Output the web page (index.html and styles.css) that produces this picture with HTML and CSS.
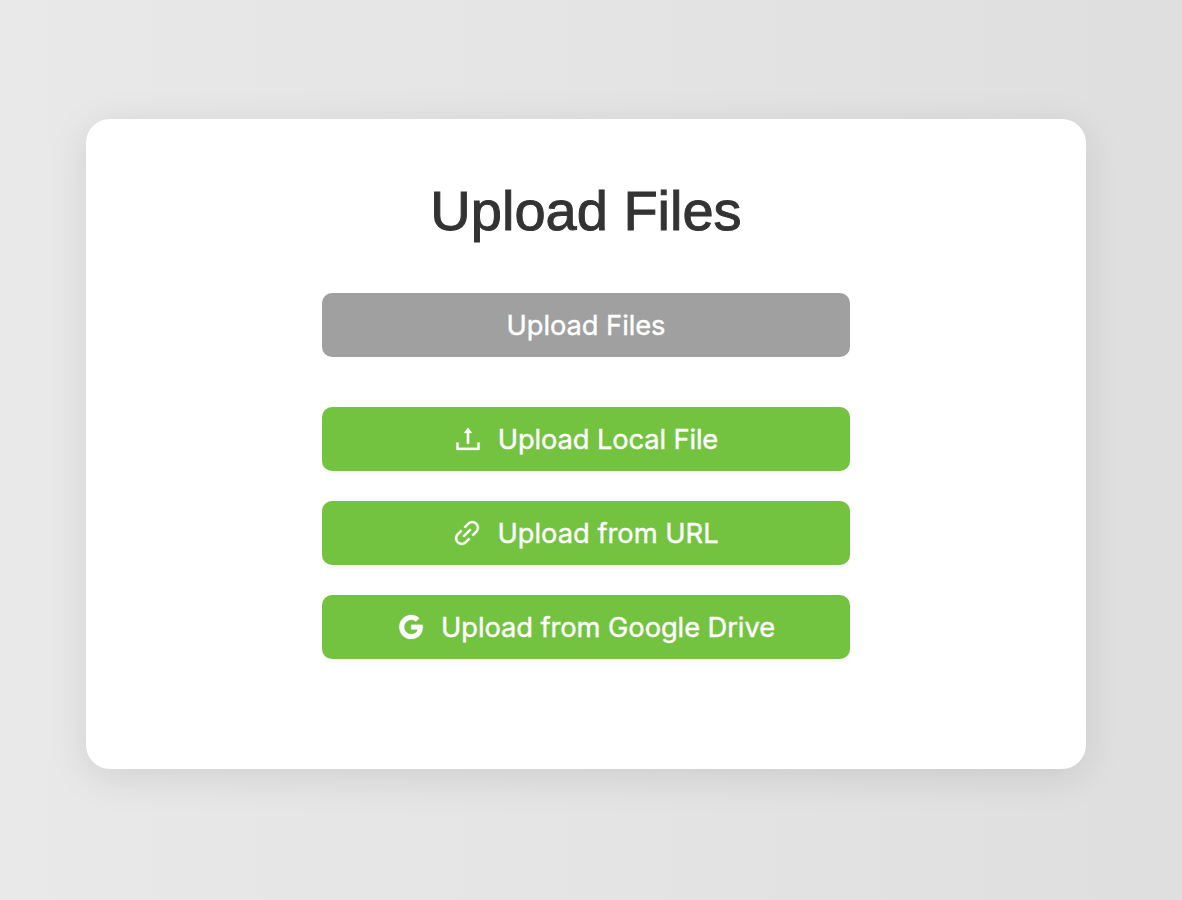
FILE: index.html
```
<!DOCTYPE html>
<html lang="en">
<head>
<meta charset="utf-8">
<title>Upload Files</title>
<link rel="stylesheet" href="styles.css">
</head>
<body>
<main class="card">
  <h1 class="title">Upload Files</h1>
  <button class="btn btn-muted"><span class="label">Upload Files</span></button>
  <div class="sources">
    <button class="btn">
      <svg class="icon" viewBox="64 64 896 896" fill="currentColor"><path d="M400 317.700h73.900V656c0 4.400 3.600 8 8 8h60c4.400 0 8-3.600 8-8V317.700H624c6.700 0 10.400-7.700 6.300-12.900L518.300 163a8 8 0 0 0-12.600 0l-112 141.700c-4.100 5.300-.4 13 6.300 13zM878 626h-60c-4.400 0-8 3.600-8 8v154H214V634c0-4.400-3.600-8-8-8h-60c-4.400 0-8 3.600-8 8v198c0 17.700 14.300 32 32 32h684c17.700 0 32-14.300 32-32V634c0-4.400-3.600-8-8-8z"/></svg>
      <span class="label label-local">Upload Local File</span>
    </button>
    <button class="btn">
      <svg class="icon" viewBox="64 64 896 896" fill="currentColor"><path d="M574 665.400a8.030 8.030 0 0 0-11.300 0L446.500 781.600c-53.800 53.800-144.600 59.500-204 0-59.500-59.500-53.800-150.200 0-204l116.200-116.200c3.100-3.100 3.100-8.200 0-11.300l-39.800-39.800a8.030 8.030 0 0 0-11.300 0L191.400 526.500c-84.600 84.600-84.600 221.500 0 306s221.500 84.600 306 0l116.200-116.200c3.100-3.100 3.100-8.200 0-11.300L574 665.400zm258.600-474c-84.600-84.600-221.500-84.600-306 0L410.300 307.600a8.030 8.030 0 0 0 0 11.300l39.700 39.700c3.100 3.100 8.200 3.100 11.300 0l116.200-116.200c53.800-53.800 144.600-59.500 204 0 59.500 59.500 53.800 150.200 0 204L665.300 562.600a8.030 8.030 0 0 0 0 11.300l39.800 39.800c3.100 3.100 8.200 3.100 11.300 0l116.200-116.200c84.500-84.600 84.500-221.500 0-306.100zM610.100 372.300a8.030 8.030 0 0 0-11.300 0L372.300 598.700a8.030 8.030 0 0 0 0 11.300l39.600 39.600c3.100 3.100 8.200 3.100 11.300 0l226.400-226.400c3.100-3.100 3.100-8.200 0-11.300l-39.500-39.600z"/></svg>
      <span class="label label-url">Upload from URL</span>
    </button>
    <button class="btn">
      <svg class="icon" viewBox="64 64 896 896" fill="currentColor"><path d="M881 442.400H519.700v148.500h206.400c-8.900 48-35.900 88.600-76.600 115.800-34.400 23-78.300 36.600-129.900 36.600-99.900 0-184.400-67.500-214.600-158.200-7.600-23-12-47.600-12-72.900s4.400-49.900 12-72.900c30.300-90.600 114.800-158.100 214.700-158.100 56.300 0 106.800 19.400 146.600 57.400l110-110.100c-66.500-62-153.200-100-256.600-100-149.900 0-279.600 86-342.700 211.400-26 51.800-40.800 110.400-40.800 172.400S151 632.800 177 684.600C240.100 810 369.800 896 519.700 896c103.600 0 190.400-34.400 253.800-93 72.500-66.800 114.400-165.200 114.400-282.100 0-27.200-2.400-53.300-6.900-78.500z"/></svg>
      <span class="label">Upload from Google Drive</span>
    </button>
  </div>
</main>
</body>
</html>
```

FILE: styles.css
```
* { box-sizing: border-box; }
body {
  margin: 0;
  height: 900px;
  padding: 119px 96px 0 86px;
  background: linear-gradient(90deg, #e9e9e9, #dfdfdf);
  font-family: Inter, "Liberation Sans", sans-serif;
}
.card {
  height: 650px;
  padding: 56px 236px 0;
  border-radius: 24px;
  background: #fff;
  box-shadow: 0 8px 40px rgba(0, 0, 0, 0.1);
}
.title {
  margin: 0 0 48px;
  height: 70px;
  line-height: 71px;
  text-align: center;
  font-family: "Liberation Sans", sans-serif;
  font-size: 56px;
  font-weight: 400;
  color: #333;
  -webkit-text-stroke: 1px #333;
}
.btn {
  display: flex;
  align-items: center;
  justify-content: center;
  gap: 16px;
  width: 100%;
  height: 64px;
  padding: 0;
  border: 0;
  border-radius: 10px;
  background: #73c340;
  box-shadow: 0 4px 0 rgba(0, 0, 0, 0.02);
  color: #fff;
  font: 400 27.3px/44px Inter, "Liberation Sans", sans-serif;
  letter-spacing: -0.07px;
}
.btn-muted {
  background: #a0a0a0;
  box-shadow: none;
}
.sources {
  display: grid;
  gap: 30px;
  margin-top: 50px;
}
.icon {
  width: 28px;
  height: 28px;
  stroke: currentColor;
  stroke-width: 8;
}
.label {
  padding-top: 2px;
  white-space: nowrap;
  -webkit-text-stroke: 0.4px #fff;
}
.label-local { letter-spacing: -0.13px; }
.label-url { letter-spacing: 0; }
```
